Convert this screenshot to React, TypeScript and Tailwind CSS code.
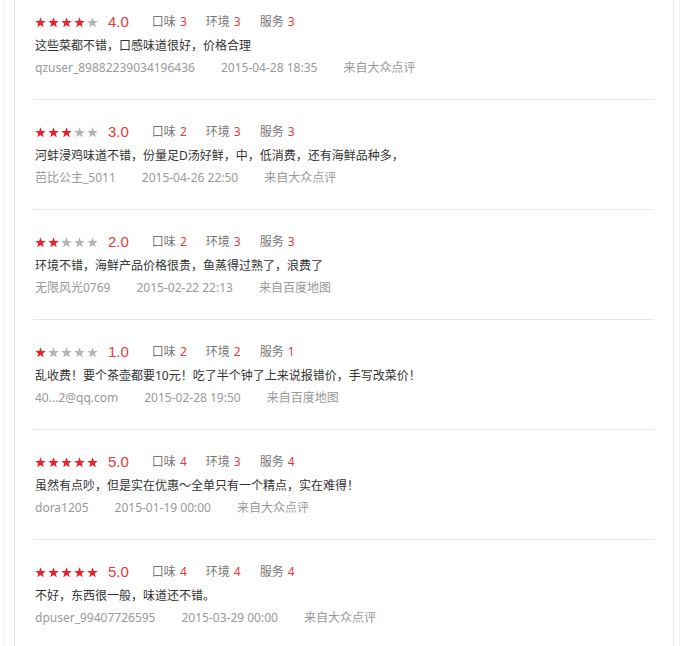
const reviews = [
  { stars: 4, taste: 3, env: 3, service: 3, text: "这些菜都不错，口感味道很好，价格合理", user: "qzuser_89882239034196436", date: "2015-04-28 18:35", source: "来自大众点评" },
  { stars: 3, taste: 2, env: 3, service: 3, text: "河蚌浸鸡味道不错，份量足D汤好鲜，中，低消费，还有海鲜品种多，", user: "芭比公主_5011", date: "2015-04-26 22:50", source: "来自大众点评" },
  { stars: 2, taste: 2, env: 3, service: 3, text: "环境不错，海鲜产品价格很贵，鱼蒸得过熟了，浪费了", user: "无限风光0769", date: "2015-02-22 22:13", source: "来自百度地图" },
  { stars: 1, taste: 2, env: 2, service: 1, text: "乱收费！要个茶壶都要10元！吃了半个钟了上来说报错价，手写改菜价！", user: "40...2@qq.com", date: "2015-02-28 19:50", source: "来自百度地图" },
  { stars: 5, taste: 4, env: 3, service: 4, text: "虽然有点吵，但是实在优惠～全单只有一个精点，实在难得！", user: "dora1205", date: "2015-01-19 00:00", source: "来自大众点评" },
  { stars: 5, taste: 4, env: 4, service: 4, text: "不好，东西很一般，味道还不错。", user: "dpuser_99407726595", date: "2015-03-29 00:00", source: "来自大众点评" },
];

function Star({ on }: { on: boolean }) {
  return (
    <svg width="11" height="10.5" viewBox="0 0 24 23" className={on ? "fill-[#e8232b]" : "fill-[#b4b4b4]"}>
      <polygon points="12,0.5 15,8.6 23.5,8.8 16.8,14.1 19.2,22.5 12,17.6 4.8,22.5 7.2,14.1 0.5,8.8 9,8.6" />
    </svg>
  );
}

export default function App() {
  return (
    <div
      className="min-h-screen w-[688px] bg-white overflow-hidden"
      style={{ fontFamily: '"Noto Sans", "Noto Sans CJK SC", sans-serif' }}
    >
      <div className="ml-[3px] w-[677px] min-h-[646px] border-l border-r border-[#f3f3f3]">
        <div className="ml-[10px] w-[660px] min-h-[646px] border-l border-r border-[#e6e6e6] pl-[18px] pr-[19px]">
          {reviews.map((r, i) => (
            <div
              key={i}
              className={`border-b border-[#e8e8e8] pb-[21px] ${i === 0 ? "pt-[12px]" : "pt-[22px]"}`}
            >
              <div className="flex h-[20px] items-center pl-[2px]">
                <div className="flex items-center gap-[2px]">
                  {[0, 1, 2, 3, 4].map((s) => (
                    <Star key={s} on={s < r.stars} />
                  ))}
                </div>
                <span
                  className="ml-[10px] text-[15px] leading-[20px] text-[#e4393c]"
                  style={{ fontFamily: '"Liberation Sans", sans-serif' }}
                >
                  {r.stars}.0
                </span>
                <span className="ml-[23px] text-[12px] text-[#777]">口味</span>
                <span className="ml-[4px] text-[12px] text-[#e4393c]">{r.taste}</span>
                <span className="ml-[19px] text-[12px] text-[#777]">环境</span>
                <span className="ml-[4px] text-[12px] text-[#e4393c]">{r.env}</span>
                <span className="ml-[19px] text-[12px] text-[#777]">服务</span>
                <span className="ml-[4px] text-[12px] text-[#e4393c]">{r.service}</span>
              </div>
              <div className="mt-[2px] h-[24px] pl-[2px] text-[12px] leading-[24px] text-[#333]">{r.text}</div>
              <div className="flex h-[20px] items-center pl-[2px] text-[12px] text-[#999]">
                <span>{r.user}</span>
                <span className="ml-[26px]">{r.date}</span>
                <span className="ml-[26px]">{r.source}</span>
              </div>
            </div>
          ))}
        </div>
      </div>
    </div>
  );
}
